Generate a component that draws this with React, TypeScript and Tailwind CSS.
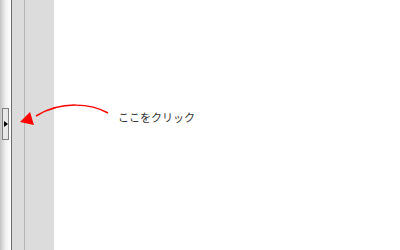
export default function App() {
  return (
    <div className="relative flex h-[250px] w-[400px] bg-white font-['Noto_Sans_CJK_JP',sans-serif]">
      {/* Collapsed side handle */}
      <div className="w-[11px] bg-gradient-to-r from-[#c4c4c4] via-[#f0f0f0] to-white pt-[108px] pl-[2px]">
        <button className="flex h-[32px] w-[7px] items-center justify-start border border-[#808080] bg-[#e8e8e8] p-0">
          <svg viewBox="0 0 4 6" className="ml-[1px] h-[6px] w-[4px]">
            <path d="M0 0L4 3L0 6Z" fill="#000" />
          </svg>
        </button>
      </div>
      <div className="w-px bg-[#6a6a6a]" />

      {/* Grey panel */}
      <div className="flex w-[42px] bg-[#dcdcdc]">
        <div className="w-[13px] border-r border-[#b4b4b4]" />
        <div className="flex-1" />
      </div>

      {/* Main area */}
      <div className="flex-1 pl-[64px] pt-[103px]">
        <span className="text-[11px] leading-[14px] text-[#333]">
          ここをクリック
        </span>
      </div>

      {/* Pointer arrow */}
      <svg
        className="pointer-events-none absolute left-0 top-0"
        width="400"
        height="250"
        viewBox="0 0 400 250"
      >
        <path
          d="M108 113 C 92 104, 62 100, 36 116"
          fill="none"
          stroke="#ff0000"
          strokeWidth="1.5"
        />
        <path d="M20 122L30 112L34 125Z" fill="#ff0000" />
      </svg>
    </div>
  );
}
